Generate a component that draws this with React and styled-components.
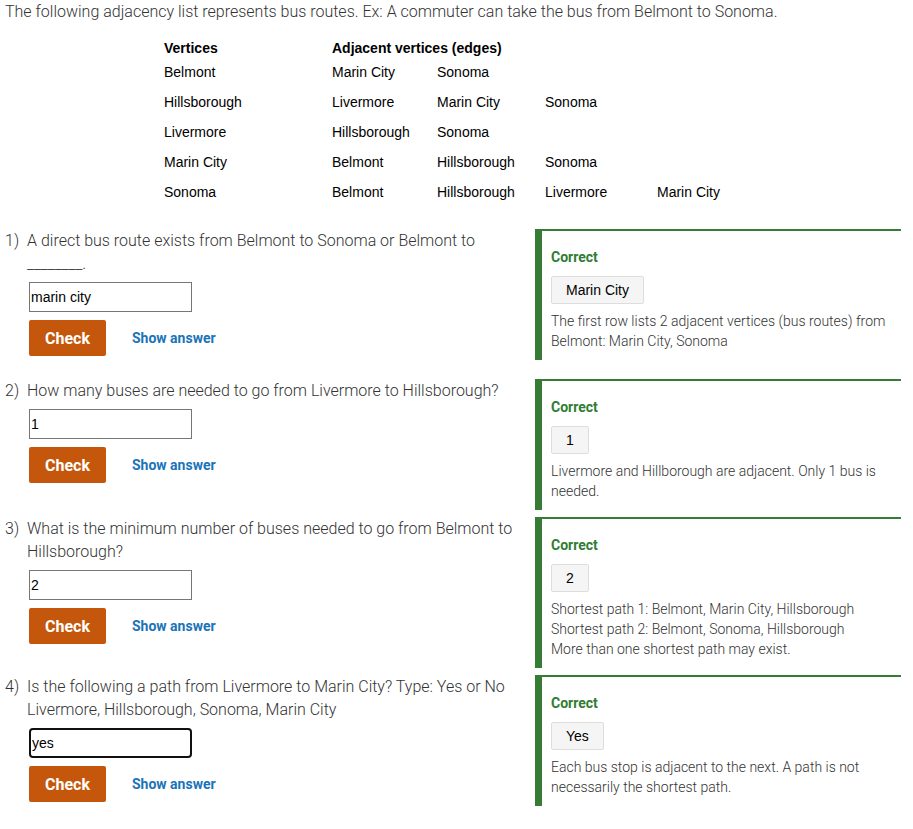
import styled, { createGlobalStyle } from "styled-components";

const GlobalStyle = createGlobalStyle`
  body {
    margin: 0;
    background: #fff;
    font-family: Roboto, "Liberation Sans", sans-serif;
  }
`;

const Page = styled.div`
  padding: 0 5px;
  color: #333;
  font-weight: 300;
`;

const Intro = styled.p`
  margin: 0;
  font-size: 16px;
  line-height: 24px;
`;

const Table = styled.div`
  display: grid;
  grid-template-columns: 168px 105px 108px 112px auto;
  grid-template-rows: 18px repeat(5, 30px);
  margin: 15px 0 22px 159px;
  font-family: "Liberation Sans", Arial, sans-serif;
  font-size: 14px;
  font-weight: 400;
  color: #000;
`;

const Cell = styled.div`
  display: flex;
  align-items: center;
  white-space: nowrap;
  font-weight: ${(p) => (p.head ? 700 : 400)};
  grid-column: ${(p) => p.span || "auto"};
`;

const Row = styled.div`
  display: flex;
  align-items: flex-start;
`;

const Left = styled.div`
  width: 530px;
  flex: 0 0 530px;
  padding-bottom: 23px;
  padding-right: 12px;
  box-sizing: border-box;
`;

const Question = styled.div`
  display: flex;
  font-size: 16px;
  line-height: 23px;
`;

const Num = styled.span`
  flex: 0 0 22px;
`;

const Controls = styled.div`
  margin-left: 24px;
`;

const Input = styled.input`
  display: block;
  box-sizing: border-box;
  width: 163px;
  height: 30px;
  margin-top: 7px;
  padding: 1px 1px;
  font-family: "Liberation Sans", Arial, sans-serif;
  font-size: 14px;
  color: #000;
  outline: none;
  border: ${(p) => (p.focused ? "2px solid #101010" : "1px solid #767676")};
  border-radius: ${(p) => (p.focused ? "4px" : "0")};
`;

const Actions = styled.div`
  display: flex;
  align-items: center;
  margin-top: 8px;
`;

const CheckBtn = styled.button`
  width: 77px;
  height: 36px;
  border: none;
  border-radius: 2px;
  background: #c4570c;
  color: #fff;
  font-family: Roboto, sans-serif;
  font-weight: 700;
  font-size: 16px;
  cursor: pointer;
`;

const ShowLink = styled.button`
  margin-left: 26px;
  padding: 0;
  border: none;
  background: none;
  color: #1a73b8;
  font-family: Roboto, sans-serif;
  font-weight: 700;
  font-size: 14px;
  cursor: pointer;
`;

const Panel = styled.div`
  width: 366px;
  flex: 0 0 366px;
  box-sizing: border-box;
  margin: 0 0 7px;
  border-top: 2px solid #367c34;
  border-left: 7px solid #367c34;
  padding: 16px 9px 9px;
`;

const Status = styled.div`
  color: #2e7d32;
  font-weight: 700;
  font-size: 14px;
  line-height: 20px;
`;

const Answer = styled.div`
  display: inline-block;
  margin-top: 9px;
  padding: 5px 14px;
  line-height: 16px;
  background: #f5f5f5;
  border: 1px solid #ddd;
  border-radius: 2px;
  font-family: "Liberation Sans", Arial, sans-serif;
  font-size: 14px;
  color: #000;
`;

const Explain = styled.div`
  margin-top: 7px;
  font-size: 14px;
  line-height: 20px;
  color: #333;
`;

const adjacency = [
  ["Belmont", "Marin City", "Sonoma"],
  ["Hillsborough", "Livermore", "Marin City", "Sonoma"],
  ["Livermore", "Hillsborough", "Sonoma"],
  ["Marin City", "Belmont", "Hillsborough", "Sonoma"],
  ["Sonoma", "Belmont", "Hillsborough", "Livermore", "Marin City"],
];

const questions = [
  {
    text: ["A direct bus route exists from Belmont to Sonoma or Belmont to ________."],
    value: "marin city",
    answer: "Marin City",
    explain: ["The first row lists 2 adjacent vertices (bus routes) from Belmont: Marin City, Sonoma"],
  },
  {
    text: ["How many buses are needed to go from Livermore to Hillsborough?"],
    value: "1",
    answer: "1",
    explain: ["Livermore and Hillborough are adjacent. Only 1 bus is needed."],
  },
  {
    text: ["What is the minimum number of buses needed to go from Belmont to Hillsborough?"],
    value: "2",
    answer: "2",
    explain: [
      "Shortest path 1: Belmont, Marin City, Hillsborough",
      "Shortest path 2: Belmont, Sonoma, Hillsborough",
      "More than one shortest path may exist.",
    ],
  },
  {
    text: [
      "Is the following a path from Livermore to Marin City? Type: Yes or No",
      "Livermore, Hillsborough, Sonoma, Marin City",
    ],
    value: "yes",
    answer: "Yes",
    explain: ["Each bus stop is adjacent to the next. A path is not necessarily the shortest path."],
    focused: true,
  },
];

function App() {
  return (
    <>
      <GlobalStyle />
      <Page>
        <Intro>
          The following adjacency list represents bus routes. Ex: A commuter can take the bus from
          Belmont to Sonoma.
        </Intro>
        <Table>
          <Cell head>Vertices</Cell>
          <Cell head span="2 / 6">
            Adjacent vertices (edges)
          </Cell>
          {adjacency.map((row) =>
            [0, 1, 2, 3, 4].map((i) => <Cell key={row[0] + i}>{row[i] || ""}</Cell>)
          )}
        </Table>

        {questions.map((q, i) => (
          <Row key={i}>
            <Left>
              <Question>
                <Num>{i + 1})</Num>
                <div>
                  {q.text.map((t) => (
                    <div key={t}>{t}</div>
                  ))}
                </div>
              </Question>
              <Controls>
                <Input defaultValue={q.value} focused={q.focused} />
                <Actions>
                  <CheckBtn>Check</CheckBtn>
                  <ShowLink>Show answer</ShowLink>
                </Actions>
              </Controls>
            </Left>
            <Panel>
              <Status>Correct</Status>
              <Answer>{q.answer}</Answer>
              <Explain>
                {q.explain.map((e) => (
                  <div key={e}>{e}</div>
                ))}
              </Explain>
            </Panel>
          </Row>
        ))}
      </Page>
    </>
  );
}

export default App;
